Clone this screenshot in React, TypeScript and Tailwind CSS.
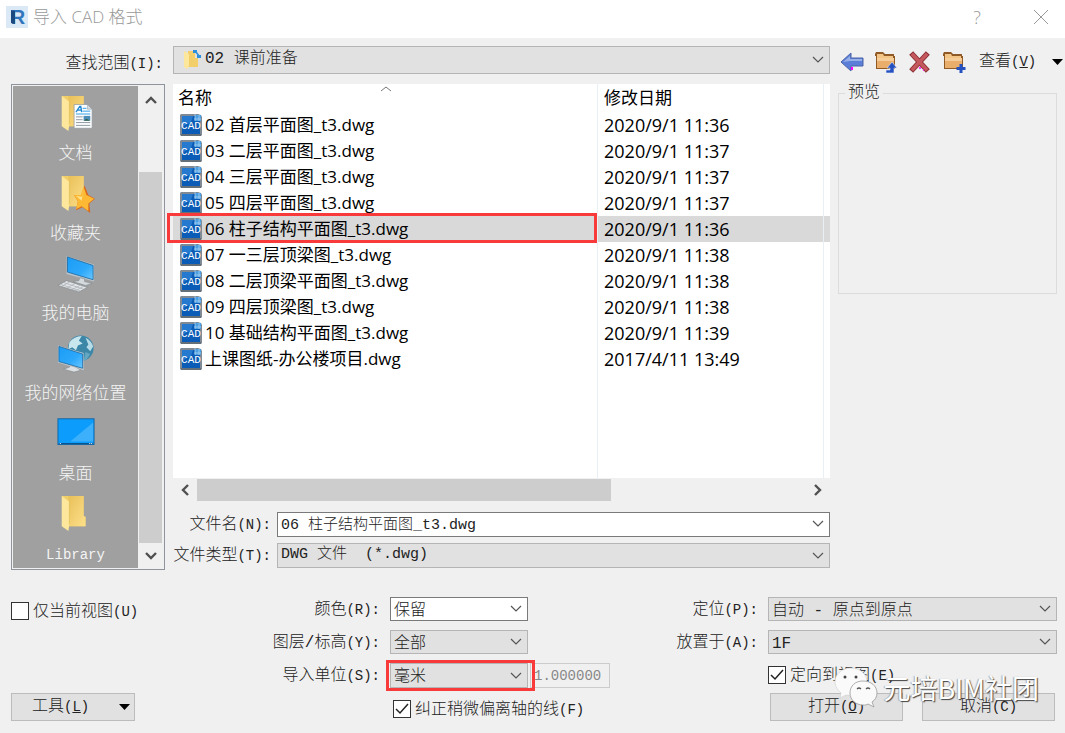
import React, { useState } from 'react';

const files = [
  { name: '02 首层平面图_t3.dwg', date: '2020/9/1 11:36' },
  { name: '03 二层平面图_t3.dwg', date: '2020/9/1 11:37' },
  { name: '04 三层平面图_t3.dwg', date: '2020/9/1 11:37' },
  { name: '05 四层平面图_t3.dwg', date: '2020/9/1 11:37' },
  { name: '06 柱子结构平面图_t3.dwg', date: '2020/9/1 11:36' },
  { name: '07 一三层顶梁图_t3.dwg', date: '2020/9/1 11:38' },
  { name: '08 二层顶梁平面图_t3.dwg', date: '2020/9/1 11:38' },
  { name: '09 四层顶梁图_t3.dwg', date: '2020/9/1 11:38' },
  { name: '10 基础结构平面图_t3.dwg', date: '2020/9/1 11:39' },
  { name: '上课图纸-办公楼项目.dwg', date: '2017/4/11 13:49' },
];

const Folder = () => (
  <>
    <path d="M5 1h23v22h2v10H10z" fill="#f0cf68" />
    <path d="M12 1h16v21l2 1v10H12z" fill="url(#folderBack)" />
    <path d="M5 1l8 6v24l-1 7-7-5z" fill="#fde79c" />
    <path d="M13 7v24" stroke="#d9b64e" strokeWidth="0.6" />
    <defs>
      <linearGradient id="folderBack" x1="0" y1="0" x2="1" y2="1">
        <stop offset="0" stopColor="#e9c05a" />
        <stop offset="1" stopColor="#fde08a" />
      </linearGradient>
    </defs>
  </>
);

const Screen = () => (
  <defs>
    <linearGradient id="screen" x1="0" y1="0" x2="1" y2="1">
      <stop offset="0" stopColor="#1a9cf5" />
      <stop offset="0.6" stopColor="#2ca8fb" />
      <stop offset="1" stopColor="#6cc8ff" />
    </linearGradient>
  </defs>
);

const DocsIcon = () => (
  <svg width="40" height="40" viewBox="0 0 40 40">
    <Folder />
    <path d="M18 10h14l5 5v20H18z" fill="#fbfdfe" stroke="#8b9299" strokeWidth="0.7" />
    <path d="M32 10v5h5z" fill="#d5dce2" stroke="#8b9299" strokeWidth="0.5" />
    <path d="M20 18l4-6h1l1 6M22 16h4" stroke="#1c86d1" strokeWidth="1.4" fill="none" />
    <path d="M27 14h4M27 17h8M20 20h15" stroke="#2a9be6" strokeWidth="1" />
    <path d="M20 23h7M20 26h7M20 29h15M20 32h15" stroke="#8d979f" strokeWidth="1" />
    <rect x="28" y="22" width="7" height="5" fill="#4c8db8" />
    <path d="M28 27l3-2 4 2z" fill="#315f44" />
  </svg>
);

const StarIcon = () => (
  <svg width="40" height="40" viewBox="0 0 40 40">
    <Folder />
    <path d="M29 11l4 10 7 4-6 5 1 10-8-6-7 3 2-9-4-7 8 0z" fill="#d9681c" />
    <path d="M28 12l3 9 8 4-6 5 0 8-7-5-6 3 2-8-4-7 7 0z" fill="#fdb933" />
    <path d="M28 14l-1 9-7-1 6 5z" fill="#ffe28a" />
  </svg>
);

const ComputerIcon = () => (
  <svg width="40" height="40" viewBox="0 0 40 40">
    <Screen />
    <path d="M10 1l29 9v18l-29-8z" fill="#b9c4cc" />
    <path d="M11 2l27 9v15l-27-8z" fill="url(#screen)" stroke="#14639c" strokeWidth="0.8" />
    <path d="M24 24l5 1v3l8 2-7 2-13-4 6-1z" fill="#d4d9dd" stroke="#777f86" strokeWidth="0.5" />
    <path d="M10 27l22 7-9 5-22-7z" fill="#e3e6e8" stroke="#82888d" strokeWidth="0.7" />
    <path d="M7 29l21 7M4 31l21 7M14 28l-9 5M19 30l-9 5M24 32l-9 5M28 33l-9 5" stroke="#a5abb0" strokeWidth="0.7" />
  </svg>
);

const NetworkIcon = () => (
  <svg width="40" height="40" viewBox="0 0 40 40">
    <Screen />
    <circle cx="25" cy="14" r="13.5" fill="#3c87a8" />
    <path d="M13 8q5-7 13-7l-3 5 4 3-5 2-2 5-4-3-4 2z" fill="#c8e6ee" />
    <path d="M30 3q6 3 8 9l-3 5-4-4 2-3z" fill="#b7dce8" />
    <path d="M30 18l5 2-4 6-3 1z" fill="#63a7c2" />
    <path d="M1 11l27 8v18l-27-8z" fill="#c3ccd2" />
    <path d="M2 12l25 8v15l-25-7z" fill="url(#screen)" stroke="#14639c" strokeWidth="0.8" />
    <path d="M14 32l6 2 5 3-7 2-11-3 6-2z" fill="#dce0e3" stroke="#777f86" strokeWidth="0.5" />
  </svg>
);

const DesktopIcon = () => (
  <svg width="40" height="40" viewBox="0 0 40 40">
    <rect x="1" y="4" width="38" height="27" fill="#0c9cfb" stroke="#1264a0" />
    <path d="M38 8v20H14z" fill="#3db0fc" />
    <path d="M2 30h36" stroke="#0a4f88" />
    <path d="M3 30h1M34 30h1M36 30h1" stroke="#fff" />
  </svg>
);

const LibraryIcon = () => <svg width="40" height="40" viewBox="0 0 40 40"><Folder /></svg>;

const places = [
  { name: '文档', icon: DocsIcon },
  { name: '收藏夹', icon: StarIcon },
  { name: '我的电脑', icon: ComputerIcon },
  { name: '我的网络位置', icon: NetworkIcon },
  { name: '桌面', icon: DesktopIcon },
  { name: 'Library', icon: LibraryIcon },
];

const CadIcon = () => (
  <svg width="22" height="22" viewBox="0 0 22 22" className="block">
    <path d="M0 1l1-1h17l3 1 1 2v18l-1 1H1l-1-1z" fill="#7f8a94" />
    <path d="M2 2h14l4 4v14H2z" fill="#0a5cb6" />
    <path d="M2 2h11l-2 6-9 5z" fill="#2579cf" />
    <path d="M15 1h6v6h-6z" fill="#4a9fe2" />
    <path d="M15 0v7M19 1v6M14 5h7" stroke="#b4d9f5" strokeWidth="0.7" />
    <text x="11" y="15" textAnchor="middle" fontSize="11" fill="#fff" className="font-['Liberation_Mono'] font-normal">CAD</text>
    <path d="M1 21h20" stroke="#59636c" strokeWidth="1.4" />
  </svg>
);

const ToolFolder = () => (
  <>
    <path d="M1 4l1-2h7l2 2h9v2h1v13H2V6H1z" fill="#8f5a26" />
    <path d="M3 4h6l1 2h9v2H3z" fill="#f2c486" />
    <path d="M3 8h17v10H3z" fill="#e9ad6c" />
    <path d="M3 8h17v3H3z" fill="#f6cd98" />
  </>
);

const Chevron = ({ className = '' }) => (
  <svg width="12" height="8" viewBox="0 0 12 8" className={className}>
    <path d="M1 1l5 5 5-5" fill="none" stroke="#555" strokeWidth="1.2" />
  </svg>
);

// ASCII runs are set in a smaller monospace so that they keep half the width of a hanzi
const Label = ({ text, ascii, hotkey }: { text: string; ascii?: string; hotkey?: string }) => (
  <>
    {text}
    <span className="text-sm">{hotkey ? <>(<u>{hotkey}</u>)</> : ascii}</span>
  </>
);

type ComboProps = { id: string; value: string; white?: boolean; className?: string };

const Combo = ({ id, value, white, className = '' }: ComboProps) => (
  <div className={`relative ${className}`}>
    <select id={id} className={`block h-full w-full appearance-none border pr-8 pl-[3px] outline-none ${white ? 'border-[#7a7a7a] bg-white' : 'border-[#b5b5b5] bg-[#e1e1e1]'}`}>
      <option>{value}</option>
    </select>
    <Chevron className="pointer-events-none absolute top-1/2 right-[6px] -translate-y-1/2" />
  </div>
);

const Check = ({ id, checked, children }: { id: string; checked?: boolean; children: React.ReactNode }) => {
  const [on, setOn] = useState(!!checked);
  return (
    <label htmlFor={id} className="flex h-6 items-center gap-1 whitespace-nowrap">
      <span className="relative block size-[18px] shrink-0">
        <input id={id} type="checkbox" checked={on} onChange={e => setOn(e.target.checked)} className="block size-[18px] appearance-none border border-[#333] bg-white" />
        {on && (
          <svg viewBox="0 0 18 18" className="pointer-events-none absolute inset-0">
            <path d="M3 9l4 4 8-9" fill="none" stroke="#222" strokeWidth="1.5" />
          </svg>
        )}
      </span>
      <span className="pt-[2px] leading-6">{children}</span>
    </label>
  );
};

const App: React.FC = () => {
  const [selected, setSelected] = useState(4);

  return (
    <div className="min-h-screen overflow-hidden bg-[#f0f0f0] font-['Liberation_Mono','Noto_Sans_CJK_SC',monospace] text-base font-light text-[#222]">
      <header className="flex h-[38px] items-center bg-white pl-[6px] font-['Open_Sans','Noto_Sans_CJK_SC',sans-serif] text-[17px] text-[#999]">
        <svg width="22" height="22" viewBox="0 0 22 22" className="-mt-1">
          <rect width="22" height="22" fill="#dbe8f5" />
          <text x="12" y="18" textAnchor="middle" fontSize="20" fill="#2f76bd" className="font-['Liberation_Sans'] font-bold">R</text>
          <path d="M5 4l4 1v13l-4-1z" fill="#1b4a80" />
        </svg>
        <h1 className="-mt-1 ml-[5px] flex-1">导入 CAD 格式</h1>
        <button aria-label="帮助" className="-mt-1 w-10 text-[18px] font-light">?</button>
        <button aria-label="关闭" className="-mt-1 mr-4 ml-[36px]">
          <svg width="16" height="16" viewBox="0 0 16 16"><path d="M1 1l14 14M15 1L1 15" stroke="#999" strokeWidth="1" /></svg>
        </button>
      </header>

      <div className="flex h-9 items-center pt-2 pl-[11px]">
        <label htmlFor="lookIn" className="w-[152px] pt-2 text-right"><Label text="查找范围" ascii="(I):" /></label>
        <div className="relative ml-[10px] flex-1">
          <Combo id="lookIn" value="02 课前准备" className="h-7 [&>select]:pb-1 [&>select]:pl-[31px]" />
          <svg width="18" height="20" viewBox="0 0 18 20" className="pointer-events-none absolute top-1 left-[10px]">
            <path d="M5 1h7v7h3v9H5z" fill="#f3cf6c" />
            <path d="M1 1l5 3v12l-2 3-3-2z" fill="#fde79c" />
            <path d="M10 0h4v3h-4zM14 5h4v3h-4z" fill="#2a8fdd" />
            <path d="M13 2l3 4" stroke="#2a8fdd" strokeWidth="1.5" />
          </svg>
        </div>
        <div className="ml-[5px] flex w-[230px] items-center pt-[3px] [&>button]:flex [&>button]:w-[34px] [&>button]:shrink-0 [&>button]:justify-center">
          <button aria-label="后退">
            <svg width="24" height="22" viewBox="0 0 24 22">
              <path d="M1 11l10-9v5h12v8H11v5z" fill="#5b7fd8" stroke="#4a62a8" strokeWidth="1" />
              <path d="M3 11l7-6v3h12v2H10z" fill="#98b0e8" />
              <path d="M12 16v3" stroke="#f0f" strokeWidth="2" />
            </svg>
          </button>
          <button aria-label="上一级">
            <svg width="24" height="24" viewBox="0 0 24 24">
              <ToolFolder />
              <path d="M18 12l5 6h-3v5h-8v-3h4v-2h-3z" fill="#2450c0" stroke="#e6ecfa" strokeWidth="0.6" />
            </svg>
          </button>
          <button aria-label="删除">
            <svg width="22" height="22" viewBox="0 0 22 22">
              <path d="M4 4l13 14M17 4L4 18" stroke="#8c3036" strokeWidth="5.4" strokeLinecap="square" />
              <path d="M4 4l13 14M17 4L4 18" stroke="#c4585c" strokeWidth="3.4" strokeLinecap="square" />
              <path d="M11 16v2M14 19h1" stroke="#f0f" strokeWidth="1.5" />
            </svg>
          </button>
          <button aria-label="新建文件夹">
            <svg width="24" height="24" viewBox="0 0 24 24">
              <ToolFolder />
              <path d="M19 14v9M14.500 18.500h9" stroke="#2450c0" strokeWidth="3" />
            </svg>
          </button>
          <div className="ml-2 flex flex-1 items-center justify-between pr-[2px] whitespace-nowrap">
            <a href="#view"><Label text="查看" hotkey="V" /></a>
            <svg width="11" height="6" viewBox="0 0 11 6"><path d="M0 0h11L5.500 6z" fill="#000" /></svg>
          </div>
        </div>
      </div>

      <div className="mt-[10px] grid grid-cols-[154px_minmax(0,1fr)_219px] gap-2 pr-2 pl-[11px]">
        <nav className="flex border border-[#8f939b] bg-[#f0f0f0] p-px">
          <ul className="flex-1 bg-[#a0a0a0] py-px">
            {places.map(({ name, icon: Icon }) => (
              <li key={name}>
                <button className="flex h-20 w-full flex-col items-center gap-[10px] pt-2 whitespace-nowrap text-[#f4f4f4]">
                  <Icon />
                  <span className={name === 'Library' ? 'text-sm leading-6' : 'text-[17px] leading-6'}>{name}</span>
                </button>
              </li>
            ))}
          </ul>
          <div className="flex w-[25px] flex-col items-center border-x border-[#f0f0f0]">
            <svg width="12" height="8" viewBox="0 0 12 8" className="my-[10px] shrink-0"><path d="M1 7l5-5 5 5" fill="none" stroke="#505050" strokeWidth="2.400" /></svg>
            <div className="mt-[58px] w-full flex-1 bg-[#cdcdcd]" />
            <svg width="12" height="8" viewBox="0 0 12 8" className="mt-[9px] mb-2 shrink-0"><path d="M1 1l5 5 5-5" fill="none" stroke="#505050" strokeWidth="2.400" /></svg>
          </div>
        </nav>

        <main className="flex flex-col">
          <div className="relative flex-1 bg-white font-['Open_Sans','Noto_Sans_CJK_SC',sans-serif] text-[17px] font-normal text-black">
            <div className="pointer-events-none absolute inset-y-0 left-[424px] border-l border-[#e8f0f6]" />
            <div className="pointer-events-none absolute inset-y-0 right-[6px] border-l border-[#e8f0f6]" />
            <svg width="12" height="6" viewBox="0 0 12 6" className="absolute top-[2px] left-[207px]"><path d="M1 5l5-4 5 4" fill="none" stroke="#777" /></svg>
            <table className="w-full table-fixed border-collapse text-left leading-[26px]">
              <thead>
                <tr className="h-7">
                  <th className="w-[431px] pl-[5px] font-normal">名称</th>
                  <th className="font-normal">修改日期</th>
                </tr>
              </thead>
              <tbody>
                {files.map((f, i) => (
                  <tr key={f.name} onClick={() => setSelected(i)} className={`h-[26px] ${i === selected ? 'bg-[#d9d9d9]' : ''}`}>
                    <td className="relative p-0 pl-[7px]">
                      <div className="flex h-[26px] items-center gap-[3px] whitespace-nowrap"><CadIcon />{f.name}</div>
                      {i === 4 && <div className="pointer-events-none absolute -top-[3px] -left-[6px] h-[30px] w-[430px] border-3 border-[#f93a3a]" />}
                    </td>
                    <td className="h-[26px] p-0 text-[18px] whitespace-nowrap">{f.date}</td>
                  </tr>
                ))}
              </tbody>
            </table>
          </div>
          <div className="flex h-6 items-center">
            <svg width="8" height="12" viewBox="0 0 8 12" className="mx-2"><path d="M7 1L2 6l5 5" fill="none" stroke="#505050" strokeWidth="2.400" /></svg>
            <div className="h-[22px] w-2/3 max-w-[414px] bg-[#cdcdcd]" />
            <svg width="8" height="12" viewBox="0 0 8 12" className="mr-2 ml-auto"><path d="M1 1l5 5-5 5" fill="none" stroke="#505050" strokeWidth="2.400" /></svg>
          </div>
          <div className="mt-[10px] flex items-center text-[15px]">
            <label htmlFor="fileName" className="w-[98px] text-right text-base whitespace-nowrap"><Label text="文件名" ascii="(N):" /></label>
            <div className="relative ml-[6px] h-[25px] flex-1">
              <input id="fileName" key={selected} defaultValue={files[selected].name} className="block h-full w-full border border-[#7a7a7a] bg-white pr-8 pb-[3px] pl-[3px] outline-none" />
              <Chevron className="pointer-events-none absolute top-2 right-[6px]" />
            </div>
          </div>
          <div className="mt-[6px] flex items-center text-[15px]">
            <label htmlFor="fileType" className="w-[98px] text-right text-base whitespace-nowrap"><Label text="文件类型" ascii="(T):" /></label>
            <Combo id="fileType" value={'DWG 文件\u00a0\u00a0(*.dwg)'} className="ml-[6px] h-[25px] flex-1" />
          </div>
          <div className="h-[2px]" />
        </main>

        <fieldset className="h-[210px] border border-[#dcdcdc] pl-[6px]">
          <legend className="px-[3px] leading-[18px]">预览</legend>
        </fieldset>
      </div>

      <div className="relative mt-[27px] flex pr-2 pl-[11px]">
        <div className="flex w-[254px] flex-col items-start justify-between pt-[2px]">
          <Check id="currentView"><Label text="仅当前视图" ascii="(U)" /></Check>
          <button className="flex h-7 w-[124px] items-center justify-between border border-[#bcbcbc] bg-[#e1e1e1] pr-1 pl-5">
            <span><Label text="工具" hotkey="L" /></span>
            <svg width="11" height="6" viewBox="0 0 11 6"><path d="M0 0h11L5.500 6z" fill="#000" /></svg>
          </button>
        </div>

        <div className="grid w-[345px] shrink-0 grid-cols-[115px_minmax(0,1fr)] content-start gap-x-[10px] gap-y-[9px] leading-[26px] whitespace-nowrap [&>label]:h-6">
          <label htmlFor="color" className="text-right"><Label text="颜色" ascii="(R):" /></label>
          <Combo id="color" value="保留" white className="h-6 w-[138px]" />
          <label htmlFor="layers" className="text-right"><Label text="图层/标高" ascii="(Y):" /></label>
          <Combo id="layers" value="全部" className="h-6 w-[138px]" />
          <label htmlFor="units" className="text-right"><Label text="导入单位" ascii="(S):" /></label>
          <div className="flex gap-[2px]">
            <div className="relative w-[138px] shrink-0">
              <Combo id="units" value="毫米" className="h-[25px]" />
              <div className="pointer-events-none absolute -top-[3px] -right-[7px] -bottom-[3px] -left-[4px] z-10 border-3 border-[#f93a3a]" />
            </div>
            <input aria-label="导入单位系数" disabled defaultValue="1.000000" className="h-[25px] w-[80px] border border-[#cccccc] bg-[#f0f0f0] pl-[3px] text-sm text-[#888]" />
          </div>
          <div className="col-start-2 pl-[3px]">
            <Check id="correctLines" checked><Label text="纠正稍微偏离轴的线" ascii="(F)" /></Check>
          </div>
        </div>

        <div className="flex-1">
          <div className="grid grid-cols-[148px_minmax(0,1fr)] gap-x-[10px] gap-y-[9px] leading-[26px] whitespace-nowrap [&>label]:h-6">
            <label htmlFor="positioning" className="text-right"><Label text="定位" ascii="(P):" /></label>
            <Combo id="positioning" value="自动 - 原点到原点" className="h-6" />
            <label htmlFor="placeAt" className="text-right"><Label text="放置于" ascii="(A):" /></label>
            <Combo id="placeAt" value="1F" className="h-6" />
            <div className="col-start-2">
              <Check id="orient" checked><Label text="定向到视图" ascii="(E)" /></Check>
            </div>
          </div>
          <div className="mt-[6px] mr-[2px] ml-[160px] flex justify-between gap-4">
            <button className="h-7 w-[133px] border border-[#bcbcbc] bg-[#e1e1e1]"><Label text="打开" hotkey="O" /></button>
            <button className="h-7 w-[133px] border border-[#bcbcbc] bg-[#e1e1e1]"><Label text="取消" ascii="(C)" /></button>
          </div>
        </div>

        <div className="pointer-events-none absolute right-[26px] bottom-[12px] flex items-center gap-[5px]">
          <svg width="44" height="42" viewBox="0 0 44 42">
            <path d="M17 1C8 1 1 7 1 15c0 5 3 8 6 11l-1 5 6-3c10 2 21-3 21-13C33 7 26 1 17 1z" fill="#fafafa" stroke="#ccc" strokeWidth="0.6" />
            <circle cx="11" cy="10" r="1.500" fill="#444" />
            <circle cx="22" cy="10" r="1.500" fill="#444" />
            <path d="M29 14c-8 0-13 5-13 12s6 12 13 12c2 0 4 0 5-1l6 3-2-5c3-2 5-5 5-9 0-7-6-12-14-12z" fill="#fafafa" stroke="#999" strokeWidth="0.8" />
            <path d="M23 22q2-2 4 0M32 22q2-2 4 0" stroke="#555" fill="none" strokeWidth="1.200" />
          </svg>
          <span className="font-['Noto_Sans_CJK_SC',sans-serif] text-[27px] leading-8 font-normal whitespace-nowrap text-white [text-shadow:1px_1px_1px_#444,-1px_0_1px_#aaa]">元培BIM社团</span>
        </div>
      </div>
    </div>
  );
};

export default App;
